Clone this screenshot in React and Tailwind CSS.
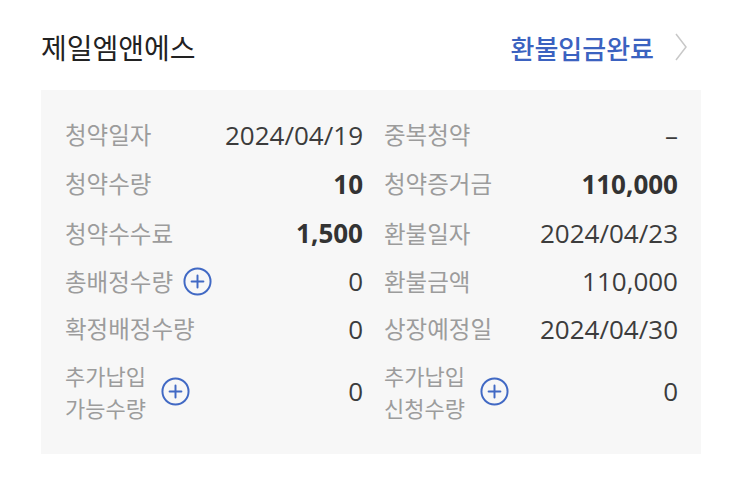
import React from 'react'

const font = { fontFamily: '"Noto Sans CJK KR", sans-serif' }
const numFont = { fontFamily: '"Open Sans", "Noto Sans", sans-serif' }

const PlusCircle = () => (
    <svg width="29" height="29" viewBox="0 0 28 28" fill="none" stroke="#4169c4" strokeWidth="1.9">
        <circle cx="14" cy="14" r="12.6" />
        <path d="M14 8.3v11.4M8.3 14h11.4" strokeLinecap="round" />
    </svg>
)

const rows = [
    [
        { label: '청약일자', value: '2024/04/19' },
        { label: '중복청약', value: '–' },
    ],
    [
        { label: '청약수량', value: '10', bold: true },
        { label: '청약증거금', value: '110,000', bold: true },
    ],
    [
        { label: '청약수수료', value: '1,500', bold: true },
        { label: '환불일자', value: '2024/04/23' },
    ],
    [
        { label: '총배정수량', value: '0', plus: true },
        { label: '환불금액', value: '110,000' },
    ],
    [
        { label: '확정배정수량', value: '0' },
        { label: '상장예정일', value: '2024/04/30' },
    ],
    [
        { label: ['추가납입', '가능수량'], value: '0', plus: true },
        { label: ['추가납입', '신청수량'], value: '0', plus: true },
    ],
]

const rowHeights = ['h-[48px]', 'h-[50px]', 'h-[49px]', 'h-[47px]', 'h-[48px]', 'h-[76px]']

const Cell = ({ item }) => (
    <div className="flex items-center justify-between">
        {Array.isArray(item.label) ? (
            <div className="flex items-center gap-[15px]">
                <span className="text-[#9c9c9c] text-[22px] leading-[32px]">
                    {item.label[0]}<br />{item.label[1]}
                </span>
                {item.plus && <PlusCircle />}
            </div>
        ) : (
            <div className="flex items-center gap-[10px]">
                <span className="text-[#9c9c9c] text-[23.5px]">{item.label}</span>
                {item.plus && <PlusCircle />}
            </div>
        )}
        <span
            className={item.bold ? 'text-[#333] font-bold text-[26px]' : 'text-[#3c3c3c] text-[26px]'}
            style={numFont}
        >
            {item.value}
        </span>
    </div>
)

export default function App() {
    return (
        <div className="w-[743px] h-[485px] bg-white" style={font}>
            <div className="flex items-center justify-between pl-[41px] pr-[56px] pt-[30px] pb-[26px] h-[90px]">
                <h1 className="text-[28px] text-[#222]">제일엠앤에스</h1>
                <div className="flex items-center gap-[21px]">
                    <span className="text-[26px] text-[#3b62c0] font-medium">환불입금완료</span>
                    <svg width="12" height="28" viewBox="0 0 12 28" fill="none" stroke="#c8c8c8" strokeWidth="1.5">
                        <path d="M1 1l10 13L1 27" />
                    </svg>
                </div>
            </div>
            <div className="mx-[41px] w-[660px] h-[364px] bg-[#f7f7f7] pl-[24px] pr-[23px] pt-[21px]">
                {rows.map((row, i) => (
                    <div key={i} className={`grid grid-cols-[298px_1fr] gap-x-[21px] ${rowHeights[i]}`}>
                        <Cell item={row[0]} />
                        <Cell item={row[1]} />
                    </div>
                ))}
            </div>
        </div>
    )
}
